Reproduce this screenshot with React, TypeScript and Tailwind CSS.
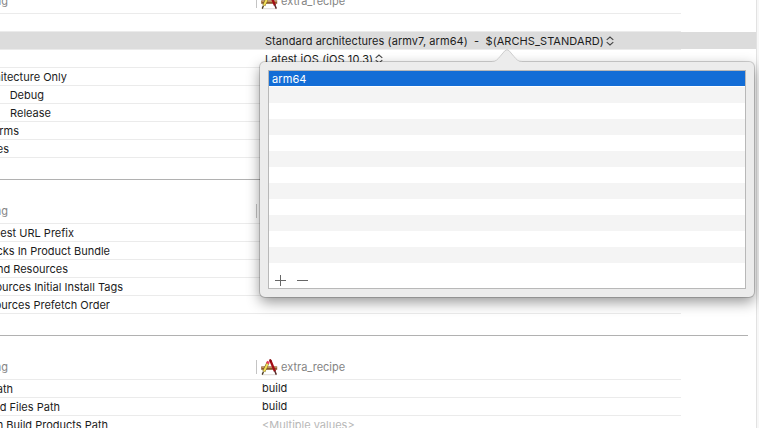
import type { ReactNode } from "react";

function AppIcon() {
  return (
    <svg width="17" height="17" viewBox="0 0 17 17" className="shrink-0">
      <path d="M1 15.7h15" stroke="#cfcac4" strokeWidth="0.7" />
      <path d="M0.2 7.4h16v3.4H0.2z" fill="#8b5a30" />
      <path d="M0.6 8.4h15.2" stroke="#c4965e" strokeWidth="1.1" />
      <path d="M7 3.6L2.8 12.6" stroke="#7d6a22" strokeWidth="3" />
      <path d="M7 3.8L3 12.4" stroke="#f4e05a" strokeWidth="2" />
      <path d="M6.4 4.6L7.4 2.4" stroke="#ea3f60" strokeWidth="2.8" />
      <path d="M2.4 12.8L1.2 15.6" stroke="#4a3a20" strokeWidth="1.4" />
      <path d="M9.4 1.4L13.9 12.4" stroke="#a50d14" strokeWidth="2.4" />
      <path d="M8.9 0.4L9.9 2.8" stroke="#860a10" strokeWidth="2.2" />
      <path d="M13.7 11.8L15.3 15.6" stroke="#5a2a28" strokeWidth="1.5" />
    </svg>
  );
}

function Stepper() {
  return (
    <svg width="8" height="10" viewBox="0 0 8 10" className="ml-[2px] shrink-0" fill="none" stroke="#444" strokeWidth="1.1">
      <path d="M0.7 3.9L4 1L7.3 3.9M0.7 6.1L4 9L7.3 6.1" />
    </svg>
  );
}

function Label({ end, children }: { end: string; children: ReactNode }) {
  return (
    <div className="h-full w-[256px] shrink-0">
      <div className={`flex h-full items-center justify-end overflow-hidden ${end}`}>
        <span className="shrink-0">{children}</span>
      </div>
    </div>
  );
}

function Row({ children }: { children?: ReactNode }) {
  return <div className="flex h-[18px] w-[681px] items-center border-b border-[#ebebeb]">{children}</div>;
}

function Header({ small = false }: { small?: boolean }) {
  return (
    <div
      className={`flex w-[681px] items-end border-b border-[#ebebeb] text-[#858585] ${small ? "h-[14px]" : "h-[44px]"}`}
    >
      <div className="flex h-[24px] w-full shrink-0 items-center">
        <Label end="w-[8px]">Setting</Label>
        <div className="h-[14px] w-px bg-[#c4c4c4]" />
        <div className="ml-[4px] flex items-center">
          <AppIcon />
          <span className="ml-[3px]">extra_recipe</span>
        </div>
      </div>
    </div>
  );
}

function Divider() {
  return <div className="mt-[21px] h-px w-[748px] bg-[#b1b1b1]" />;
}

function Popover() {
  return (
    <div className="absolute left-[260px] top-[62px] h-[235px] w-[494px] rounded-[5px] bg-[#ececec] p-[8px] shadow-[0_0_0_1px_rgba(0,0,0,0.17),0_5px_14px_rgba(0,0,0,0.42)]">
      <svg className="absolute left-[232px] top-[-13px]" width="30" height="14" viewBox="0 0 30 14">
        <path d="M0 14V12.500C4 12.500 5.500 10.500 8 7.500L12.800 1.800Q15 -0.500 17.200 1.800L22 7.500C24.500 10.500 26 12.500 30 12.500V14Z" fill="#ececec" />
        <path d="M0 12.500C4 12.500 5.500 10.500 8 7.500L12.800 1.800Q15 -0.500 17.200 1.800L22 7.500C24.500 10.500 26 12.500 30 12.500" fill="none" stroke="#c4c4c4" strokeWidth="0.8" />
      </svg>
      <div className="flex h-[219px] flex-col border border-[#b8b8b8] bg-white">
        <div className="mb-px flex h-[15px] shrink-0 items-center bg-[#136dd6] pl-[3px] tracking-[0.1px] text-white">arm64</div>
        {Array.from({ length: 11 }, (_, i) => (
          <div key={i} className="h-[16px] shrink-0 odd:bg-white even:bg-[#f4f4f4]" />
        ))}
        <svg width="60" height="25" viewBox="0 0 60 25" stroke="#666" strokeWidth="1" className="shrink-0">
          <path d="M6 17.500H17M11.500 12V23M28 17.500H39" />
        </svg>
      </div>
    </div>
  );
}

export default function App() {
  return (
    <div className="relative h-[428px] w-[759px] overflow-hidden bg-white font-['Inter','Liberation_Sans',sans-serif] text-[11px] leading-[14px] text-[#1c1c1c]">
      <div className="flex h-full">
        <main className="flex h-full w-[756px] shrink-0 flex-col [&>*]:shrink-0">
          <Header small />
          <Row />
          <div className="flex h-[18px] items-start bg-[linear-gradient(to_right,#ebebeb_681px,white_681px)]">
            <div className="flex h-[17px] w-full items-center bg-[#dcdcdc] pl-[265px]">
              <span className="whitespace-pre tracking-[0.06px]">{"Standard architectures (armv7, arm64)  -  $(ARCHS_STANDARD)"}</span>
              <Stepper />
            </div>
          </div>
          <Row>
            <div className="flex items-center pl-[265px]">
              <span className="tracking-[0.1px]">Latest iOS (iOS 10.3)</span>
              <Stepper />
            </div>
          </Row>
          <Row><Label end="w-[67px]">Architecture Only</Label></Row>
          <Row><Label end="w-[44px]">Debug</Label></Row>
          <Row><Label end="w-[51px]">Release</Label></Row>
          <Row><Label end="w-[19px]">Platforms</Label></Row>
          <Row><Label end="w-[9px]">Architectures</Label></Row>
          <Divider />
          <Header />
          <Row><Label end="w-[74px]">Request URL Prefix</Label></Row>
          <Row><Label end="w-[110px]">Packs In Product Bundle</Label></Row>
          <Row><Label end="w-[68px]">Demand Resources</Label></Row>
          <Row><Label end="w-[123px]">Resources Initial Install Tags</Label></Row>
          <Row><Label end="w-[110px]">Resources Prefetch Order</Label></Row>
          <Divider />
          <Header />
          <Row>
            <Label end="w-[13px]">Path</Label>
            <span className="pb-[2px] pl-[6px]">build</span>
          </Row>
          <Row>
            <Label end="w-[60px]">Build Files Path</Label>
            <span className="pb-[2px] pl-[6px]">build</span>
          </Row>
          <Row>
            <Label end="w-[108px]">in Build Products Path</Label>
            <span className="pl-[6px] text-[#b8b8b8]">&lt;Multiple values&gt;</span>
          </Row>
        </main>
        <aside className="h-full w-[3px] border-l border-[#e2e2e2] bg-[#f7f7f7]" />
      </div>
      <Popover />
    </div>
  );
}
